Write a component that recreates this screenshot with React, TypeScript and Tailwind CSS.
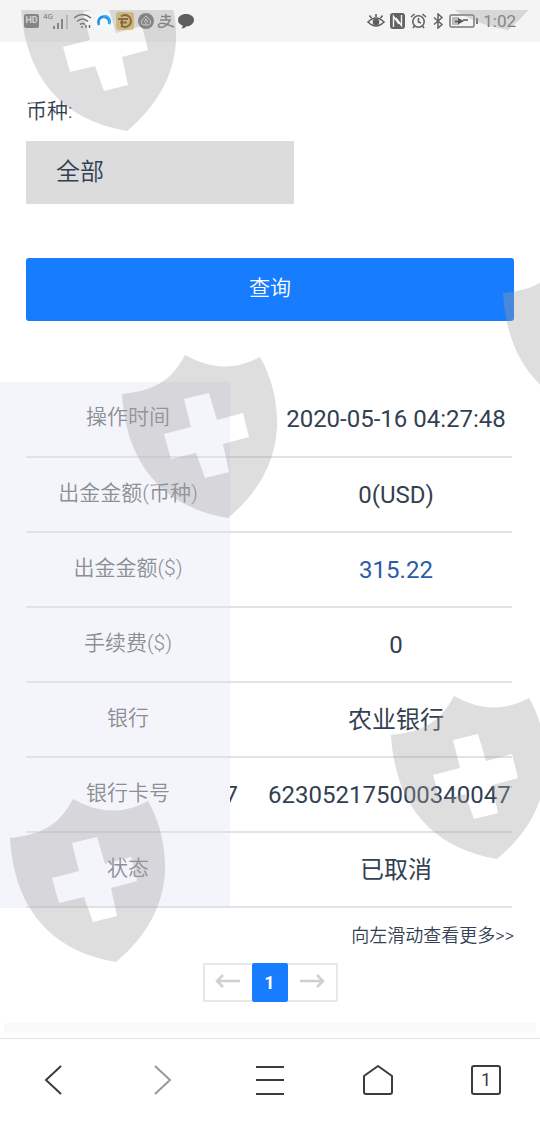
import React, { useState } from 'react';

const records = [
  { label: '操作时间', value: '2020-05-16 04:27:48' },
  { label: '出金金额(币种)', value: '0(USD)' },
  { label: '出金金额($)', value: '315.22', highlight: true },
  { label: '手续费($)', value: '0' },
  { label: '银行', value: '农业银行' },
  { label: '银行卡号', value: '6230521750003400477', scrolling: true },
  { label: '状态', value: '已取消' },
];

// Top left corner of every shield in the watermark layer
const shields = [
  [21, -42],
  [402, -143],
  [122, 345],
  [503, 244],
  [10, 789],
  [391, 686],
];

function Watermark() {
  return (
    <div className="absolute inset-x-0 top-[10px] bottom-0 overflow-hidden pointer-events-none" aria-hidden="true">
      <svg className="w-full h-full" fill="#a0a0a0" fillOpacity="0.35" fillRule="evenodd">
        {shields.map(([x, y]) => (
          <path
            key={`${x}-${y}`}
            transform={`translate(${x} ${y})`}
            d="M63 0Q102 22 138 2C151 24 156 52 155 73C153 108 136 138 106 163C40 152 4 108 0 39C30 36 49 27 63 0ZM62 44L69 72L42 79L49 104L74 98L83 123L107 117L101 89L127 82L121 58L95 65L87 38Z"
          />
        ))}
      </svg>
    </div>
  );
}

function StatusBar() {
  return (
    <header className="flex items-center justify-between h-[42px] pl-6 pr-6 bg-[#f4f4f4] text-[#686868]">
      <div className="flex items-center gap-[3px]">
        <span className="flex items-center justify-center w-[15px] h-[14px] rounded-xs bg-[#777] text-[9px] font-bold text-[#eee]">HD</span>
        <div className="flex items-end h-4 ml-px">
          <span className="self-start text-[8px] leading-none">4G</span>
          <svg width="18" height="16" viewBox="0 0 18 16" fill="none" stroke="#777" strokeWidth="2">
            <path d="M1 16v-3M5 16V10M9 16V6" />
            <path d="M14 16V2" stroke="#c4c4c4" />
          </svg>
        </div>
        <svg width="18" height="16" viewBox="0 0 18 16" fill="none" stroke="#686868" strokeWidth="1.6">
          <path d="M0 5Q8.500 -2 17 5M3 8.500Q8.500 3.500 14 8.500M6 11.500Q8.500 9.500 11 11.500" />
          <path d="M7 14h2M12 15v-3M15.500 12v3" strokeWidth="1.500" />
        </svg>
        <svg width="18" height="18" viewBox="0 0 18 18">
          <rect width="18" height="18" rx="4" fill="#f1f7fb" />
          <path d="M4 13A5.500 5.500 0 1 1 14 12" fill="none" stroke="#2389dc" strokeWidth="2.500" />
          <path d="M8 4.500A5 5 0 0 1 14 12" fill="none" stroke="#35afee" strokeWidth="2" />
        </svg>
        <svg width="18" height="18" viewBox="0 0 18 18">
          <rect width="18" height="18" rx="3" fill="#e8c566" />
          <path d="M5 4.500A6 6 0 1 1 5 13.500" fill="none" stroke="#7a4a1c" strokeWidth="2" />
          <path d="M2 7h10M4 10.500h7M6 7v7" stroke="#7a4a1c" strokeWidth="2" />
        </svg>
        <svg width="16" height="16" viewBox="0 0 16 16" className="ml-px">
          <circle cx="8" cy="8" r="8" fill="#777" />
          <path d="M8 3L12.500 8V10Q12 12 10 12H6Q3.500 12 3.500 9.500V8ZM6 9.500L8 6L10 9.500M8 9v3" fill="none" stroke="#ddd" strokeWidth="1" />
        </svg>
        <svg width="18" height="16" viewBox="0 0 18 16" fill="none" stroke="#777" strokeWidth="1.600">
          <path d="M4 3.500h10M9 1V7M3 7H13Q11 12 6 14Q1 15 1.500 12Q3 9 9 11L17 14" />
        </svg>
        <svg width="16" height="16" viewBox="0 0 16 16" fill="#5e5e5e">
          <path d="M8 1C12.500 1 16 3.500 16 7C16 10.500 12.500 13.500 8 13.500Q7 15.500 3.500 15.500Q5 14 4.500 12.500Q0 10.500 0 7C0 3.500 3.500 1 8 1Z" />
        </svg>
      </div>
      <div className="flex items-center gap-1">
        <svg width="18" height="16" viewBox="0 0 18 16" fill="none" stroke="#5e5e5e" strokeWidth="1.600">
          <path d="M1 9Q9 1 17 9Q9 17 1 9ZM9 4V1M4.500 5L2.500 2.500M13.500 5L15.500 2.500" />
          <circle cx="9" cy="9" r="2.500" fill="#5e5e5e" />
        </svg>
        <svg width="17" height="16" viewBox="0 0 17 16">
          <rect x="1" width="15" height="16" rx="3" fill="#626262" />
          <path d="M4.500 14V3.500L10 11M12.500 2V12.500L7 5" fill="none" stroke="#f4f4f4" strokeWidth="1.400" />
        </svg>
        <svg width="17" height="16" viewBox="0 0 17 16" fill="none" stroke="#626262" strokeWidth="1.600">
          <circle cx="8.500" cy="8.500" r="5.700" />
          <path d="M8.500 5V9L11 10M1 4L4.500 1M16 4L12.500 1M4.500 13L3 15M12.500 13L14 15" />
        </svg>
        <svg width="14" height="16" viewBox="0 0 14 16" fill="none" stroke="#626262" strokeWidth="1.500">
          <path d="M3 4.500L11 11.500L7 15V1L11 4.500L3 11.500" />
        </svg>
        <svg width="30" height="14" viewBox="0 0 30 14" fill="none" stroke="#777">
          <rect x="1" y="1" width="24" height="12" rx="1.500" strokeWidth="1.500" />
          <rect x="3" y="3" width="7" height="8" fill="#bbb" stroke="none" />
          <path d="M6 7.500h4M14 6h5" strokeWidth="1.500" stroke="#555" />
          <path d="M9 4L15 7L9 10.500Z" fill="#555" stroke="none" />
          <path d="M28 4v6" strokeWidth="2" />
        </svg>
        <time className="text-[17px] leading-none text-[#777]">1:02</time>
      </div>
    </header>
  );
}

function RecordTable() {
  return (
    <div className="pl-[26px] pr-7 bg-[linear-gradient(to_right,#f4f5fb_230px,transparent_230px)]">
      <table className="w-full table-fixed border-collapse">
        <tbody>
          {records.map((record) => (
            <tr key={record.label} className="h-[75px] border-b-2 border-[#e0e2e9]">
              <th scope="row" className="w-[204px] pb-[2px] text-[21px] font-[350] text-[#8b8e94]">{record.label}</th>
              {record.scrolling ? (
                <td className="overflow-hidden text-2xl">
                  <div className="flex gap-[30px] overflow-hidden whitespace-nowrap">
                    <span className="flex justify-end shrink-0 w-2 overflow-hidden" aria-hidden="true">{record.value.slice(-1)}</span>
                    <span>{record.value}</span>
                  </div>
                </td>
              ) : (
                <td className={`pl-[50px] text-center text-2xl whitespace-nowrap ${record.highlight ? 'text-[#2c5ba8]' : ''}`}>
                  {record.value}
                </td>
              )}
            </tr>
          ))}
        </tbody>
      </table>
    </div>
  );
}

function Pagination() {
  return (
    <nav className="flex self-center h-[39px] mt-[13px]" aria-label="分页">
      <button className="flex items-center justify-center w-[49px] pb-1 border-2 border-r-0 border-[#e8e8e8] rounded-l-xs" aria-label="上一页">
        <svg width="26" height="14" viewBox="0 0 26 14" fill="none" stroke="#cfcfcf" strokeWidth="2.500">
          <path d="M25 7H2M8 1L2 7L8 13" />
        </svg>
      </button>
      <button className="w-9 rounded-xs bg-[#177cfe] text-lg font-bold text-white" aria-current="page">1</button>
      <button className="flex items-center justify-center w-[50px] pb-1 border-2 border-l-0 border-[#e8e8e8] rounded-r-xs" aria-label="下一页">
        <svg width="26" height="14" viewBox="0 0 26 14" fill="none" stroke="#cfcfcf" strokeWidth="2.500">
          <path d="M1 7H24M18 1L24 7L18 13" />
        </svg>
      </button>
    </nav>
  );
}

function BrowserBar() {
  return (
    <nav className="grid grid-cols-5 h-[84px] pb-px border-t border-[#e4e4e4] bg-white text-[#3c3c3c]">
      <button className="flex items-center justify-center" aria-label="后退">
        <svg width="32" height="32" viewBox="0 0 32 32" fill="none" stroke="currentColor" strokeWidth="2">
          <path d="M23 2L8 16L23 30" />
        </svg>
      </button>
      <button className="flex items-center justify-center text-[#999]" aria-label="前进">
        <svg width="32" height="32" viewBox="0 0 32 32" fill="none" stroke="currentColor" strokeWidth="2">
          <path d="M9 2L24 16L9 30" />
        </svg>
      </button>
      <button className="flex items-center justify-center" aria-label="菜单">
        <svg width="32" height="32" viewBox="0 0 32 32" fill="none" stroke="currentColor" strokeWidth="2">
          <path d="M2 3H30M2 16H30M2 30H30" />
        </svg>
      </button>
      <button className="flex items-center justify-center" aria-label="主页">
        <svg width="32" height="32" viewBox="0 0 32 32" fill="none" stroke="currentColor" strokeWidth="2" strokeLinejoin="round">
          <path d="M16 2L30 12V28Q30 30 28 30H4Q2 30 2 28V12Z" />
        </svg>
      </button>
      <button className="flex items-center justify-center" aria-label="标签页">
        <span className="flex items-center justify-center w-[30px] h-[30px] border-2 border-[#3c3c3c] rounded-[3px] text-lg">1</span>
      </button>
    </nav>
  );
}

export default function App() {
  const [currency, setCurrency] = useState('all');

  return (
    <div className="relative flex flex-col min-h-screen overflow-hidden bg-white font-[Roboto,'Noto_Sans_CJK_SC',sans-serif] text-[#333f52]">
      <StatusBar />

      <main className="flex flex-col grow">
        <form className="flex flex-col px-[26px] pt-[54px]" onSubmit={(e) => e.preventDefault()}>
          <label htmlFor="currency" className="text-[21px] leading-[30px] font-[350]">币种:</label>
          <select
            id="currency"
            value={currency}
            onChange={(e) => setCurrency(e.target.value)}
            className="w-[55%] h-[63px] mt-[15px] px-[30px] pb-[2px] appearance-none rounded-none bg-[#dcdcdc] text-2xl font-[350]"
          >
            <option value="all">全部</option>
          </select>
          <button type="submit" className="h-[63px] mt-[54px] pb-[2px] rounded-[3px] bg-[#177cfe] text-[21px] font-[350] text-white">查询</button>
        </form>

        <section className="flex flex-col mt-[61px]">
          <RecordTable />
          <p className="mt-[14px] pr-[26px] text-right text-lg font-[350]">向左滑动查看更多&gt;&gt;</p>
          <Pagination />
        </section>

        <div className="h-[10px] mx-1 mt-auto mb-[5px] bg-[#f9f9f9]" />
      </main>

      <BrowserBar />
      <Watermark />
    </div>
  );
}
